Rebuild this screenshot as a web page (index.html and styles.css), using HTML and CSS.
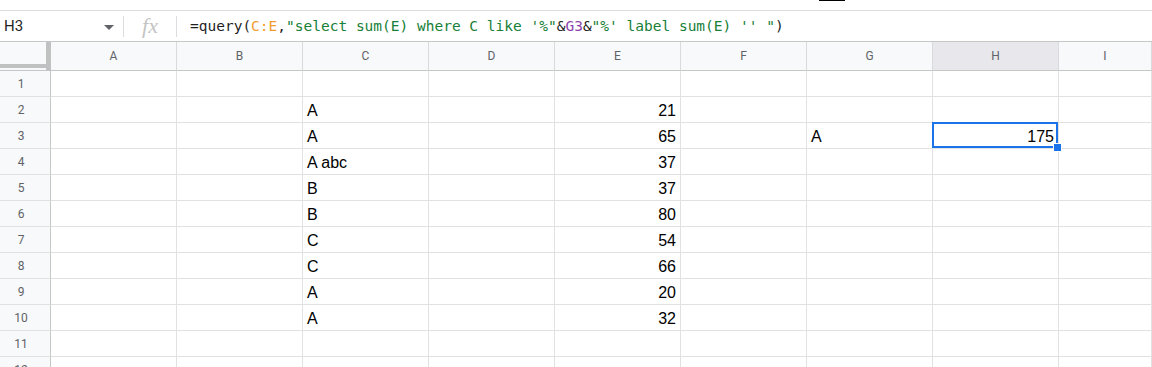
FILE: index.html
```html
<!DOCTYPE html>
<html>
<head>
<meta charset="utf-8">
<link rel="stylesheet" href="styles.css">
</head>
<body>
<div class="top-strip"><span class="mark"></span></div>
<div class="formula-bar">
  <div class="name-box"><span class="name">H3</span><span class="caret"></span></div>
  <span class="sep"></span>
  <div class="fx">fx</div>
  <span class="sep"></span>
  <div class="formula"><span class="k">=query(</span><span class="ref">C:E</span><span class="k">,</span><span class="str">"select sum(E) where C like '%"</span><span class="k">&amp;</span><span class="ref2">G3</span><span class="k">&amp;</span><span class="str">"%' label sum(E) '' "</span><span class="k">)</span></div>
</div>
<div class="grid">
  <div class="corner"><div class="corner-bar"></div></div>
  <div class="ch">A</div><div class="ch">B</div><div class="ch">C</div><div class="ch">D</div><div class="ch">E</div><div class="ch">F</div><div class="ch">G</div><div class="ch ch-sel">H</div><div class="ch">I</div>

  <div class="rh">1</div><div class="c"></div><div class="c"></div><div class="c"></div><div class="c"></div><div class="c"></div><div class="c"></div><div class="c"></div><div class="c"></div><div class="c"></div>

  <div class="rh">2</div><div class="c"></div><div class="c"></div><div class="c">A</div><div class="c"></div><div class="c num">21</div><div class="c"></div><div class="c"></div><div class="c"></div><div class="c"></div>

  <div class="rh rh-sel">3</div><div class="c"></div><div class="c"></div><div class="c">A</div><div class="c"></div><div class="c num">65</div><div class="c"></div><div class="c">A</div><div class="c num selected">175</div><div class="c"></div>

  <div class="rh">4</div><div class="c"></div><div class="c"></div><div class="c">A abc</div><div class="c"></div><div class="c num">37</div><div class="c"></div><div class="c"></div><div class="c"></div><div class="c"></div>

  <div class="rh">5</div><div class="c"></div><div class="c"></div><div class="c">B</div><div class="c"></div><div class="c num">37</div><div class="c"></div><div class="c"></div><div class="c"></div><div class="c"></div>

  <div class="rh">6</div><div class="c"></div><div class="c"></div><div class="c">B</div><div class="c"></div><div class="c num">80</div><div class="c"></div><div class="c"></div><div class="c"></div><div class="c"></div>

  <div class="rh">7</div><div class="c"></div><div class="c"></div><div class="c">C</div><div class="c"></div><div class="c num">54</div><div class="c"></div><div class="c"></div><div class="c"></div><div class="c"></div>

  <div class="rh">8</div><div class="c"></div><div class="c"></div><div class="c">C</div><div class="c"></div><div class="c num">66</div><div class="c"></div><div class="c"></div><div class="c"></div><div class="c"></div>

  <div class="rh">9</div><div class="c"></div><div class="c"></div><div class="c">A</div><div class="c"></div><div class="c num">20</div><div class="c"></div><div class="c"></div><div class="c"></div><div class="c"></div>

  <div class="rh">10</div><div class="c"></div><div class="c"></div><div class="c">A</div><div class="c"></div><div class="c num">32</div><div class="c"></div><div class="c"></div><div class="c"></div><div class="c"></div>

  <div class="rh">11</div><div class="c"></div><div class="c"></div><div class="c"></div><div class="c"></div><div class="c"></div><div class="c"></div><div class="c"></div><div class="c"></div><div class="c"></div>

  <div class="rh">12</div><div class="c"></div><div class="c"></div><div class="c"></div><div class="c"></div><div class="c"></div><div class="c"></div><div class="c"></div><div class="c"></div><div class="c"></div>
</div>
</body>
</html>
```

FILE: styles.css
```css
html, body {
  margin: 0;
  padding: 0;
  background: #ffffff;
}
body {
  width: 1152px;
  height: 367px;
  overflow: hidden;
  font-family: Roboto, "Liberation Sans", Arial, sans-serif;
}

.top-strip {
  height: 10px;
  border-bottom: 1px solid #dadce0;
  box-sizing: content-box;
  display: flex;
}
.mark {
  display: block;
  margin-left: 819px;
  width: 26px;
  height: 1px;
  background: #000;
}

.formula-bar {
  height: 30px;
  display: flex;
  align-items: center;
  border-bottom: 1px solid #c4c7c5;
}
.name-box {
  width: 123px;
  box-sizing: border-box;
  display: flex;
  align-items: center;
  justify-content: space-between;
  padding-left: 4px;
  padding-right: 9px;
}
.name {
  font-family: Roboto, "Liberation Sans", sans-serif;
  font-size: 15px;
  color: #1f1f1f;
}
.caret {
  width: 0;
  height: 0;
  border-left: 5px solid transparent;
  border-right: 5px solid transparent;
  border-top: 5px solid #5f6368;
  margin-top: 2px;
}
.sep {
  width: 1px;
  height: 21px;
  background: #dadce0;
}
.fx {
  width: 52px;
  text-align: center;
  font-family: "Liberation Serif", serif;
  font-style: italic;
  font-size: 22px;
  color: #c4c4c4;
  line-height: 30px;
}
.formula {
  padding-left: 13px;
  font-family: "DejaVu Sans Mono", "Liberation Mono", monospace;
  font-size: 14.5px;
  color: #1f1f1f;
  white-space: pre;
}
.formula .ref { color: #f09d2f; }
.formula .ref2 { color: #8e44ad; }
.formula .str { color: #188038; }

.grid {
  display: grid;
  grid-template-columns: 51px repeat(8, 126px) 93px;
  grid-template-rows: 29px repeat(12, 26px);
}
.grid > div {
  box-sizing: border-box;
}
.corner {
  background: #f8f9fa;
  border-right: 5px solid #c0c2c1;
  border-bottom: 1px solid #c4c7c5;
  display: flex;
  flex-direction: column;
}
.corner-bar {
  margin-top: 22px;
  height: 4px;
  background: #c0c2c1;
}
.ch {
  background: #f8f9fa;
  border-right: 1px solid #d9dadc;
  border-bottom: 1px solid #c4c7c5;
  display: flex;
  align-items: center;
  justify-content: center;
  font-size: 12px;
  color: #5f6368;
}
.ch-sel, .rh-sel {
  background: #e8e8ec;
}
.rh {
  background: #f8f9fa;
  border-right: 1px solid #c4c7c5;
  border-bottom: 1px solid #e1e1e1;
  display: flex;
  align-items: center;
  justify-content: center;
  padding-right: 8px;
  font-size: 12px;
  color: #5f6368;
}
.c {
  border-right: 1px solid #e1e1e1;
  border-bottom: 1px solid #e1e1e1;
  display: flex;
  align-items: flex-end;
  padding: 0 4px 2px 4px;
  font-family: "Liberation Sans", Arial, sans-serif;
  font-size: 16px;
  line-height: 18px;
  color: #000;
  white-space: nowrap;
}
.c.num {
  justify-content: flex-end;
}
.c.selected {
  position: relative;
}
.c.selected::after {
  content: "";
  position: absolute;
  left: -1px;
  top: -1px;
  right: 0;
  bottom: 0;
  border: 2px solid #1a73e8;
  pointer-events: none;
}
.c.selected::before {
  content: "";
  position: absolute;
  right: -4px;
  bottom: -4px;
  width: 7px;
  height: 7px;
  background: #1a73e8;
  border: 1px solid #fff;
  z-index: 2;
}
```
